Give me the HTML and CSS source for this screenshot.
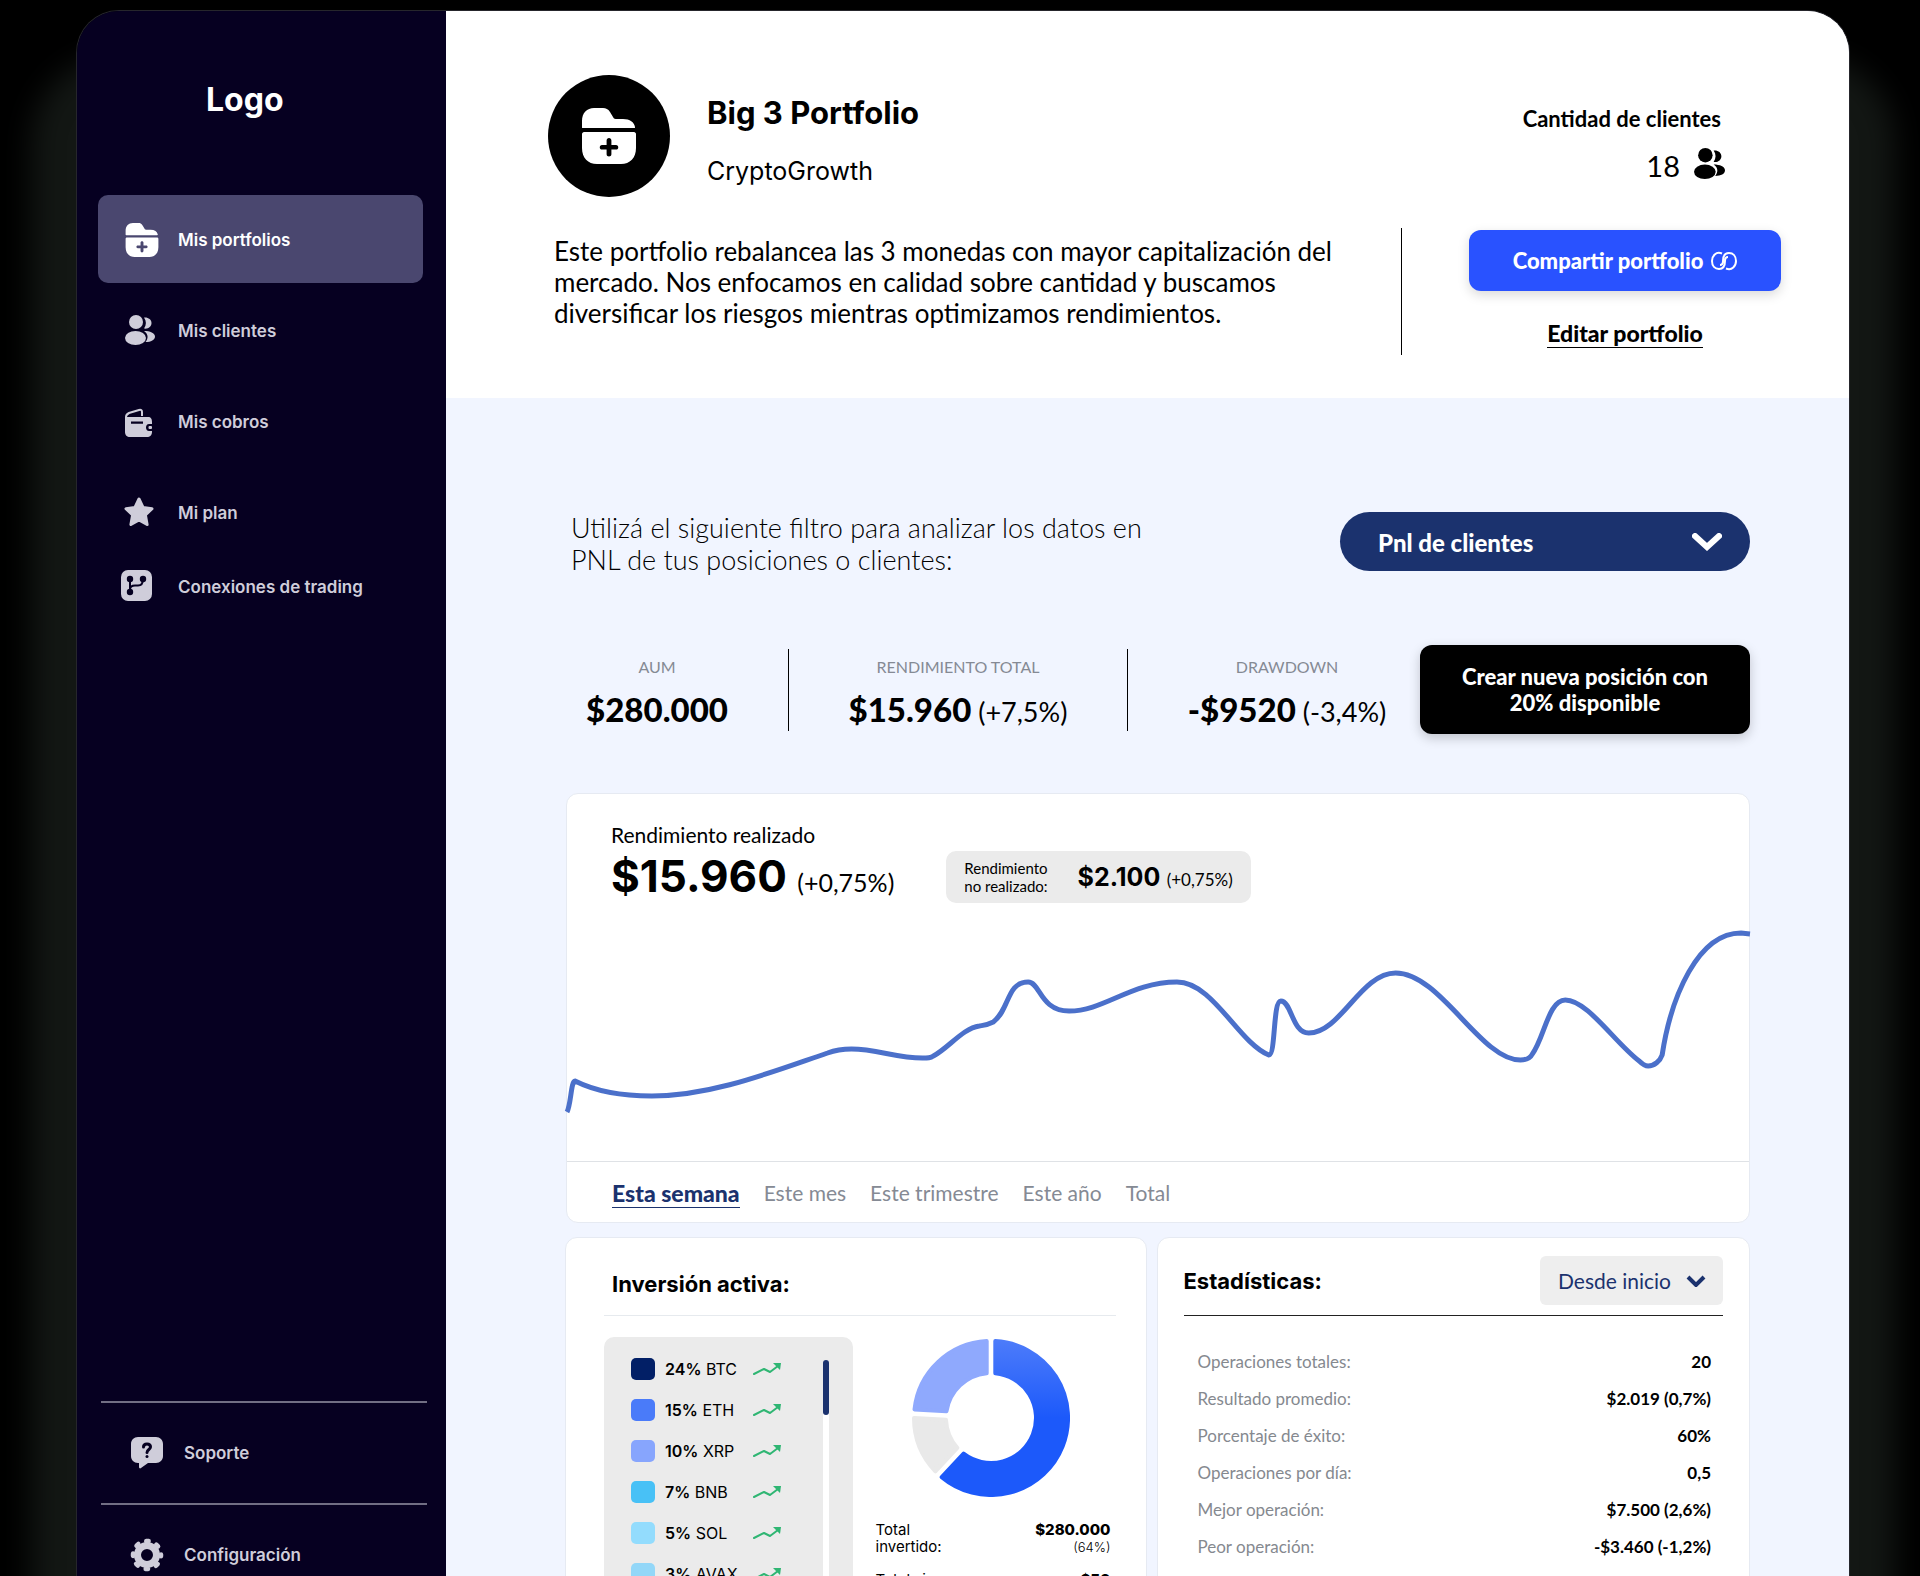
FILE: index.html
```html
<!DOCTYPE html>
<html lang="es">
<head>
  <meta charset="UTF-8" />
  <meta name="viewport" content="width=device-width, initial-scale=1.0" />
  <title>Big 3 Portfolio</title>
  <link rel="stylesheet" href="styles.css">
</head>
<body>

<!-- Shared icons -->
<svg class="sprite" aria-hidden="true">
  <symbol id="folder" viewBox="0 0 56 56">
    <path d="M1 19V13C1 5 6 0 13 0h9c3 0 5 1 7 4l3 5c1 2 2 2 4 2h6c7 0 11 3 12 8 0 1 0 1-1 1H2c-1 0-1 0-1-1z"/>
    <path fill-rule="evenodd" d="M1 26c0-1 1-2 2-2h50c1 0 2 1 2 2v14c0 10-6 16-15 16H16C7 56 1 50 1 40zM28 30c-1.400 0-2.400 1-2.400 2.400V37H21c-3 0-3 4.600 0 4.600h4.600v4.600c0 3 4.800 3 4.800 0v-4.600H35c3 0 3-4.600 0-4.600h-4.600v-4.600C30.400 31 29.400 30 28 30z"/>
  </symbol>
  <symbol id="people" viewBox="0 0 30 30">
    <circle cx="11" cy="7" r="7"/>
    <ellipse cx="10.500" cy="23" rx="10.500" ry="7"/>
    <path d="M19 2.500c4-.500 7.500 1.800 7.500 5.500s-3.500 6.300-7.500 5.500c2.500-3.500 2.500-7.500 0-11z"/>
    <path d="M19 16c6 0 11 2 11 5.500S26 27 20.500 27c3-3.500 3-8-1.500-11z"/>
  </symbol>
  <symbol id="trend" viewBox="0 0 28 14">
    <path d="M1 12l10-5 6 3 8-6" fill="none" stroke="currentColor" stroke-width="2" stroke-linecap="round" stroke-linejoin="round"/>
    <path d="M20 1h8l-1 7z"/>
  </symbol>
</svg>

<div class="frame">
  <aside class="sidebar">
    <div class="logo">Logo</div>

    <nav class="menu">
      <a class="menu-item active" href="#">
        <svg class="menu-icon" viewBox="0 0 38 38"><use href="#folder" x="4" y="2" width="34" height="34"/></svg>
        Mis portfolios
      </a>
      <a class="menu-item" href="#">
        <svg class="menu-icon" viewBox="0 0 38 38"><use href="#people" x="4" y="3" width="30" height="30"/></svg>
        Mis clientes
      </a>
      <a class="menu-item" href="#">
        <svg class="menu-icon" viewBox="0 0 38 38">
          <path d="M5 17v-3c0-2 1-3 3-4l10-3c2-.500 3 0 3 2v4" fill="none" stroke="currentColor" stroke-width="2"/>
          <path fill-rule="evenodd" d="M4 14h23c3 0 4 2 4 5v2h-3c-4 0-4 7 0 7h3v1c0 3-2 5-5 5H9c-3 0-5-2-5-5zM10 18.500v2.200h12v-2.200z"/>
          <rect x="27.500" y="23" width="3.500" height="3" rx="1"/>
        </svg>
        Mis cobros
      </a>
      <a class="menu-item" href="#">
        <svg class="menu-icon" viewBox="0 0 38 38">
          <path d="M18 5l4 8.500 9 1.200-6.600 6.300 1.700 9.500-8.100-4.500-8.100 4.500 1.700-9.500L5 14.700l9-1.200z" stroke="currentColor" stroke-width="3" stroke-linejoin="round"/>
        </svg>
        Mi plan
      </a>
      <a class="menu-item compact" href="#">
        <svg class="menu-icon" viewBox="0 0 38 38">
          <rect x="0" y="2" width="31" height="31" rx="7"/>
          <g class="branch">
            <circle cx="9" cy="11" r="2.200"/>
            <circle cx="9" cy="24" r="2.200"/>
            <circle cx="22" cy="11" r="2.200"/>
            <path d="M9 11v13M22 11c0 4-1 6.500-5 6.500h-3c-3 0-5 1-5 4" fill="none"/>
          </g>
        </svg>
        Conexiones de trading
      </a>
    </nav>

    <div class="menu-footer">
      <a class="footer-item" href="#">
        <svg class="footer-icon" viewBox="0 0 34 34">
          <path d="M8 1h18c4 0 7 3 7 7v12c0 4-3 7-7 7h-8l-7 5c-1 1-2 0-2-1v-4H8c-4 0-7-3-7-7V8c0-4 3-7 7-7z"/>
          <path class="cut" d="M13.500 11c0-4 7-4 7 0 0 2.500-3.500 2.500-3.500 5.500"/>
          <circle class="cut-dot" cx="17" cy="20.500" r="1.500"/>
        </svg>
        Soporte
      </a>
      <a class="footer-item" href="#">
        <svg class="footer-icon" viewBox="0 0 34 34">
          <circle cx="17" cy="17" r="9.500" fill="none" stroke="currentColor" stroke-width="7"/>
          <circle cx="17" cy="17" r="14" fill="none" stroke="currentColor" stroke-width="4.500" stroke-linecap="round" stroke-dasharray="2.500 8.500" stroke-dashoffset="1.250"/>
        </svg>
        Configuración
      </a>
    </div>
  </aside>

  <main class="main">
    <header class="header">
      <div class="portfolio">
        <div class="portfolio-top">
          <div class="avatar"><svg viewBox="0 0 56 56"><use href="#folder"/></svg></div>
          <div>
            <h1 class="portfolio-name">Big 3 Portfolio</h1>
            <p class="portfolio-owner">CryptoGrowth</p>
          </div>
        </div>
        <p class="portfolio-text">Este portfolio rebalancea las 3 monedas con mayor capitalización del mercado. Nos enfocamos en calidad sobre cantidad y buscamos diversificar los riesgos mientras optimizamos rendimientos.</p>
      </div>
      <div class="header-side">
        <div class="clients">
          <span class="clients-label">Cantidad de clientes</span>
          <span class="clients-count">18 <svg viewBox="0 0 30 30"><use href="#people"/></svg></span>
        </div>
        <div class="actions">
          <button class="share-btn">
            Compartir portfolio
            <svg viewBox="0 0 26 22"><path d="M11 3.500C5 1 1 6 1 11s3 8 7 8c5 0 6-4 6-8 0-2 1-4 3-4M15 18.500c6 2.500 10-2.500 10-7.500s-3-8-7-8c-5 0-6 4-6 8 0 2-1 4-3 4"/></svg>
          </button>
          <a class="edit-link" href="#">Editar portfolio</a>
        </div>
      </div>
    </header>

    <div class="content">
      <div class="filter">
        <label class="filter-text" for="pnl">Utilizá el siguiente filtro para analizar los datos en PNL de tus posiciones o clientes:</label>
        <div class="pnl-select">
          <select id="pnl"><option>Pnl de clientes</option></select>
          <svg viewBox="0 0 30 18"><path d="M3 3l12 11L27 3"/></svg>
        </div>
      </div>

      <div class="stats">
        <div class="stat">
          <span class="stat-label">AUM</span>
          <span class="stat-value"><b>$280.000</b></span>
        </div>
        <div class="stat">
          <span class="stat-label">RENDIMIENTO TOTAL</span>
          <span class="stat-value"><b>$15.960</b> (+7,5%)</span>
        </div>
        <div class="stat">
          <span class="stat-label">DRAWDOWN</span>
          <span class="stat-value"><b>-$9520</b> (-3,4%)</span>
        </div>
        <button class="create-btn">Crear nueva posición con 20% disponible</button>
      </div>

      <section class="card chart-card">
        <div class="chart-head">
          <div>
            <div class="realized-label">Rendimiento realizado</div>
            <div class="realized-value"><b>$15.960</b> (+0,75%)</div>
          </div>
          <div class="unrealized">
            <span class="unrealized-label">Rendimiento<br>no realizado:</span>
            <span class="unrealized-value"><b>$2.100</b> (+0,75%)</span>
          </div>
        </div>
        <svg class="chart" viewBox="0 0 1184 240" preserveAspectRatio="none">
          <path d="M0 191C4 184 4 160 8 160C30 171 55 175 85 175C145 175 205 151 261 132C269 129 277 128 285 128C310 128 330 137 356 137C362 137 364 137 367 135C382 127 397 107 413 105C419 104 421 104 427 101C444 88 440 61 462 61C474 61 474 90 503 90C538 90 565 61 611 61C647 61 672 121 703 134C710 134 707 80 715 80C726 80 726 112 743 112C775 112 795 52 830 52C875 52 915 139 955 139C962 139 965 137 967 133C979 117 983 79 1000 79C1022 79 1050 122 1074 140C1077 143 1080 145 1083 145C1089 145 1095 140 1097 134C1106 75 1133 12 1176 12L1185 13"/>
        </svg>
        <nav class="tabs">
          <a class="tab selected" href="#">Esta semana</a>
          <a class="tab" href="#">Este mes</a>
          <a class="tab" href="#">Este trimestre</a>
          <a class="tab" href="#">Este año</a>
          <a class="tab" href="#">Total</a>
        </nav>
      </section>

      <div class="bottom">
        <section class="card investment">
          <h2 class="card-title">Inversión activa:</h2>
          <div class="investment-body">
            <div class="coins">
              <ul class="coin-list">
                <li class="coin"><i class="swatch btc"></i><span class="coin-name"><b>24%</b> BTC</span><svg class="trend"><use href="#trend"/></svg></li>
                <li class="coin"><i class="swatch eth"></i><span class="coin-name"><b>15%</b> ETH</span><svg class="trend"><use href="#trend"/></svg></li>
                <li class="coin"><i class="swatch xrp"></i><span class="coin-name"><b>10%</b> XRP</span><svg class="trend"><use href="#trend"/></svg></li>
                <li class="coin"><i class="swatch bnb"></i><span class="coin-name"><b>7%</b> BNB</span><svg class="trend"><use href="#trend"/></svg></li>
                <li class="coin"><i class="swatch sol"></i><span class="coin-name"><b>5%</b> SOL</span><svg class="trend"><use href="#trend"/></svg></li>
                <li class="coin"><i class="swatch avax"></i><span class="coin-name"><b>3%</b> AVAX</span><svg class="trend"><use href="#trend"/></svg></li>
              </ul>
              <div class="scroll"><div class="scroll-thumb"></div></div>
            </div>
            <div class="totals">
              <svg class="donut" viewBox="-79 -79 158 158">
                <defs>
                  <linearGradient id="blue" x1="0" y1="0" x2="0" y2="1">
                    <stop offset="0" stop-color="#4c7bfa"/>
                    <stop offset=".5" stop-color="#1c59fa"/>
                  </linearGradient>
                </defs>
                <path fill="url(#blue)" stroke="url(#blue)" d="M4.300-76.900A77 77 0 1 1-49.300 59.100L-27.400 35.700A45 45 0 1 0 4.300-44.800z"/>
                <path fill="#e9e9e9" stroke="#e9e9e9" d="M-55.600 53.300A77 77 0 0 1-77 0L-45 1.800A45 45 0 0 0-33.700 29.800z"/>
                <path fill="#8fa9fd" stroke="#8fa9fd" d="M-76.500-8.600A77 77 0 0 1-4.300-76.900V-44.800A45 45 0 0 0-44.500-6.800z"/>
              </svg>
              <div class="total">
                <span>Total<br>invertido:</span>
                <span class="total-value"><b>$280.000</b><small>(64%)</small></span>
              </div>
              <div class="total">
                <span>Total sin<br>invertir:</span>
                <span class="total-value"><b>$50</b></span>
              </div>
            </div>
          </div>
        </section>

        <section class="card statistics">
          <div class="statistics-head">
            <h2 class="card-title">Estadísticas:</h2>
            <div class="range-select">
              <select aria-label="Período"><option>Desde inicio</option></select>
              <svg viewBox="0 0 20 12"><path d="M2 2l8 8 8-8"/></svg>
            </div>
          </div>
          <table class="statistics-table">
            <tr><th>Operaciones totales:</th><td>20</td></tr>
            <tr><th>Resultado promedio:</th><td>$2.019 (0,7%)</td></tr>
            <tr><th>Porcentaje de éxito:</th><td>60%</td></tr>
            <tr><th>Operaciones por día:</th><td>0,5</td></tr>
            <tr><th>Mejor operación:</th><td>$7.500 (2,6%)</td></tr>
            <tr><th>Peor operación:</th><td>-$3.460 (-1,2%)</td></tr>
          </table>
        </section>
      </div>
    </div>
  </main>
</div>

</body>
</html>
```
FILE: styles.css
```css
* {
  box-sizing: border-box;
}

body {
  font-family: Lato, "Liberation Sans", sans-serif;
  background-color: #000;
  color: #000;
  margin: 0;
  padding: 11px 71px 0 77px;
  height: 100vh;
  overflow: hidden;
}

h1,
h2,
p,
ul {
  margin: 0;
  padding: 0;
}

a {
  color: inherit;
  text-decoration: none;
}

button,
select {
  font-family: inherit;
  border: none;
  cursor: pointer;
}

select {
  appearance: none;
  width: 100%;
  height: 100%;
}

svg {
  display: block;
  fill: currentColor;
}

.sprite {
  position: absolute;
  width: 0;
  height: 0;
}

.frame {
  display: flex;
  height: calc(100vh + 18px);
  border-radius: 42px 42px 0 0;
  overflow: hidden;
  box-shadow: 0 0 0 1px #26262c, 0 90px 30px 46px #131714;
}

/* Sidebar */
.sidebar {
  display: flex;
  flex-direction: column;
  flex: 0 0 369px;
  background-color: #060021;
  font-family: Inter, sans-serif;
}

.logo {
  padding: 69px 0 0 129px;
  height: 184px;
  font-size: 32px;
  line-height: 40px;
  font-weight: 700;
  color: #fff;
}

.menu {
  display: flex;
  flex-direction: column;
  gap: 3px;
  padding: 0 23px 0 21px;
}

.menu-item,
.footer-item {
  display: flex;
  align-items: center;
  font-size: 17px;
  font-weight: 600;
  color: #cfcdda;
}

.menu-item {
  gap: 19px;
  height: 88px;
  padding: 1px 0 0 23px;
  border-radius: 10px;
}

.menu-item.active {
  background-color: #4a476f;
  color: #fff;
}

.menu-item.compact {
  height: 54px;
}

.menu-icon {
  width: 38px;
  height: 38px;
}

.branch {
  fill: #060021;
  stroke: #060021;
  stroke-width: 2;
}

.menu-footer {
  margin: auto 19px 0 24px;
}

.footer-item {
  gap: 20px;
  height: 102px;
  padding-left: 29px;
  border-top: 2px solid #716e84;
}

.footer-icon {
  width: 34px;
  height: 34px;
}

.cut {
  fill: none;
  stroke: #060021;
  stroke-width: 3;
  stroke-linecap: round;
}

.cut-dot {
  fill: #060021;
}

/* Header */
.main {
  flex: 1;
  min-width: 0;
  background-color: #f1f5ff;
}

.header {
  display: flex;
  justify-content: space-between;
  height: 387px;
  padding: 64px 68px 0 102px;
  background-color: #fff;
}

.portfolio-top {
  display: flex;
  gap: 37px;
}

.avatar {
  display: flex;
  align-items: center;
  justify-content: center;
  width: 122px;
  height: 122px;
  border-radius: 50%;
  background-color: #000;
  color: #fff;
}

.avatar svg {
  width: 56px;
  height: 56px;
}

.portfolio-name {
  margin-top: 18px;
  font-family: Inter, sans-serif;
  font-size: 31px;
  line-height: 40px;
}

.portfolio-owner {
  margin-top: 22px;
  font-family: Inter, sans-serif;
  font-size: 25px;
  line-height: 32px;
}

.portfolio-text {
  max-width: 800px;
  margin: 39px 0 0 6px;
  font-size: 26px;
  line-height: 31px;
}

.header-side {
  display: flex;
  flex-direction: column;
  gap: 49px;
  width: 380px;
  padding-top: 31px;
}

.clients {
  display: flex;
  flex-direction: column;
  align-items: flex-end;
  gap: 16px;
  height: 73px;
  padding-right: 56px;
}

.clients-label {
  padding-right: 4px;
  font-size: 22px;
  line-height: 26px;
  font-weight: 700;
}

.clients-count {
  display: flex;
  gap: 14px;
  font-size: 29px;
  line-height: 36px;
}

.clients-count svg {
  width: 31px;
  height: 31px;
}

.actions {
  display: flex;
  flex-direction: column;
  align-items: center;
  height: 127px;
  padding-left: 67px;
  border-left: 1px solid #000;
}

.share-btn {
  display: flex;
  align-items: center;
  justify-content: center;
  gap: 8px;
  width: 100%;
  height: 61px;
  margin-top: 2px;
  border-radius: 12px;
  background-color: #2952ff;
  box-shadow: 0 4px 12px rgba(0, 0, 0, 0.15);
  color: #fff;
  font-size: 22px;
  font-weight: 900;
}

.share-btn svg {
  width: 26px;
  height: 22px;
  fill: none;
  stroke: #fff;
  stroke-width: 2;
}

.edit-link {
  margin-top: 28px;
  border-bottom: 1px solid #000;
  font-size: 23px;
  line-height: 28px;
  font-weight: 900;
}

/* Filter */
.content {
  padding: 114px 99px 0 120px;
}

.filter {
  display: flex;
  justify-content: space-between;
  height: 59px;
  padding-left: 5px;
}

.filter-text {
  width: 600px;
  font-size: 27px;
  line-height: 32px;
  font-weight: 300;
}

.pnl-select {
  position: relative;
  width: 410px;
  height: 59px;
}

.pnl-select select {
  padding: 2px 38px 0;
  border-radius: 30px;
  background-color: #1b326e;
  color: #fff;
  font-size: 24px;
  font-weight: 900;
}

.pnl-select svg {
  position: absolute;
  top: 21px;
  right: 28px;
  width: 30px;
  height: 18px;
  fill: none;
  stroke: #fff;
  stroke-width: 6;
  stroke-linecap: round;
  pointer-events: none;
}

/* Stats */
.stats {
  display: grid;
  grid-template-columns: 223fr 339fr 292fr 330px;
  align-items: center;
  margin-top: 74px;
}

.stat {
  display: flex;
  flex-direction: column;
  align-items: center;
  gap: 12px;
  height: 82px;
  padding-top: 8px;
  border-right: 1px solid #000;
  white-space: nowrap;
}

.stat:first-child {
  padding-right: 40px;
}

.stat:nth-child(3) {
  padding-left: 26px;
  border-right: none;
}

.stat-label {
  font-size: 16px;
  line-height: 20px;
  color: #858a94;
}

.stat-value {
  font-size: 27px;
  line-height: 40px;
}

.stat-value b {
  font-size: 33px;
  font-weight: 900;
}

.create-btn {
  height: 89px;
  padding: 0 30px;
  border-radius: 12px;
  background-color: #000;
  box-shadow: 0 4px 12px rgba(0, 0, 0, 0.2);
  color: #fff;
  font-size: 22px;
  line-height: 26px;
  font-weight: 900;
}

/* Cards */
.card {
  border: 1px solid #e6eaf2;
  border-radius: 12px;
  background-color: #fff;
}

.card-title {
  font-family: Inter, sans-serif;
  font-size: 22px;
  line-height: 28px;
  font-weight: 700;
}

.chart-card {
  margin-top: 59px;
}

.chart-head {
  display: flex;
  gap: 52px;
  height: 127px;
  padding: 28px 44px 0;
}

.realized-label {
  font-size: 21px;
  line-height: 26px;
}

.realized-value {
  font-size: 25px;
  line-height: 56px;
}

.realized-value b {
  margin-right: 4px;
  font-family: Inter, sans-serif;
  font-size: 44px;
}

.unrealized {
  display: flex;
  align-items: center;
  gap: 30px;
  height: 52px;
  margin-top: 29px;
  padding: 0 18px;
  border-radius: 10px;
  background-color: #ebebeb;
}

.unrealized-label {
  font-size: 15px;
  line-height: 18px;
}

.unrealized-value {
  font-size: 17px;
}

.unrealized-value b {
  margin-right: 2px;
  font-family: Inter, sans-serif;
  font-size: 25px;
}

.chart {
  width: 100%;
  height: 240px;
  fill: none;
  stroke: #4b70ca;
  stroke-width: 5;
  overflow: visible;
}

.tabs {
  display: flex;
  gap: 24px;
  height: 61px;
  padding: 16px 45px 0;
  border-top: 1px solid #dfe2e6;
}

.tab {
  height: 30px;
  font-size: 21px;
  line-height: 30px;
  color: #858a94;
}

.tab.selected {
  border-bottom: 1px solid #1b326e;
  font-size: 23px;
  font-weight: 900;
  color: #1b326e;
}

.bottom {
  display: grid;
  grid-template-columns: 582fr 594fr;
  gap: 10px;
  margin: 14px 0 0 -1px;
}

.bottom .card {
  height: 400px;
}

/* Active investment */
.investment {
  padding: 32px 30px 0 38px;
}

.investment .card-title {
  height: 46px;
  padding-left: 8px;
  border-bottom: 1px solid #e6eaee;
}

.investment-body {
  display: flex;
  justify-content: space-between;
  padding-top: 21px;
}

.coins {
  display: flex;
  justify-content: space-between;
  width: 249px;
  height: 290px;
  padding: 11px 24px 0 27px;
  border-radius: 10px;
  background-color: #ebebeb;
}

.coin-list {
  list-style: none;
}

.coin {
  display: grid;
  grid-template-columns: 24px 78px 28px;
  gap: 10px;
  align-items: center;
  height: 41px;
  font-family: Inter, sans-serif;
  font-size: 16px;
  white-space: nowrap;
}

.coin-name b {
  font-weight: 600;
}

.swatch {
  height: 22px;
  border-radius: 5px;
}

.btc {
  background-color: #021f66;
}

.eth {
  background-color: #4a7bf9;
}

.xrp {
  background-color: #87a5fd;
}

.bnb {
  background-color: #48c1f6;
}

.sol {
  background-color: #93dcfd;
}

.avax {
  background-color: #93d7f8;
}

.trend {
  width: 28px;
  height: 14px;
  color: #2fb673;
}

.scroll {
  width: 6px;
  margin-top: 12px;
  border-radius: 3px;
  background-color: #fff;
}

.scroll-thumb {
  height: 55px;
  border-radius: 3px;
  background-color: #1b326e;
}

.totals {
  width: 240px;
  padding: 2px 5px 0 0;
  font-family: Inter, sans-serif;
  font-size: 15px;
  line-height: 17px;
}

.donut {
  width: 158px;
  height: 158px;
  margin: 0 auto 24px 36px;
  stroke-width: 4;
  stroke-linejoin: round;
}

.total {
  display: flex;
  justify-content: space-between;
  margin-bottom: 15px;
}

.total-value {
  text-align: right;
}

.total-value b {
  display: block;
  font-weight: 800;
}

.total-value small {
  font-size: 13px;
  font-weight: 300;
}

/* Statistics */
.statistics {
  padding: 18px 26px 0;
}

.statistics-head {
  display: flex;
  justify-content: space-between;
  align-items: center;
  height: 60px;
  padding-bottom: 10px;
  border-bottom: 1px solid #222;
}

.range-select {
  position: relative;
  width: 183px;
  height: 49px;
}

.range-select select {
  padding: 0 18px;
  border-radius: 6px;
  background-color: #eee;
  color: #1b326e;
  font-size: 21px;
}

.range-select svg {
  position: absolute;
  top: 19px;
  right: 17px;
  width: 20px;
  height: 12px;
  fill: none;
  stroke: #1b326e;
  stroke-width: 4;
  pointer-events: none;
}

.statistics-table {
  width: 100%;
  margin-top: 27px;
  padding: 0 12px 0 14px;
  border-spacing: 0;
  font-size: 17px;
}

.statistics-table th,
.statistics-table td {
  height: 37px;
  padding: 0;
}

.statistics-table th {
  text-align: left;
  font-weight: 400;
  color: #85898f;
}

.statistics-table td {
  text-align: right;
  font-weight: 700;
}
```
